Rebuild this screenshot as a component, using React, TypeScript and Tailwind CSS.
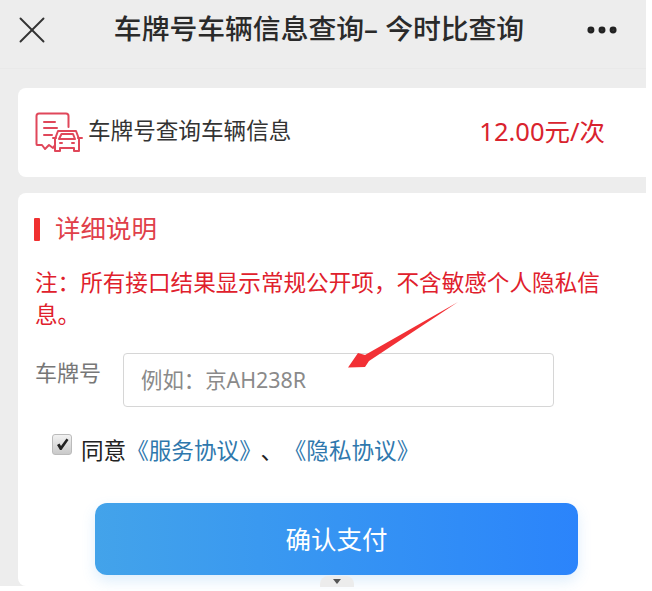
import { MoreHorizontal, X } from 'lucide-react'

const font = { fontFamily: '"Noto Sans", "Noto Sans CJK SC", sans-serif' }

function ReportCarIcon() {
  return (
    <svg width="48" height="42" viewBox="0 0 48 42" fill="none" stroke="#e0475a" strokeWidth="2" strokeLinecap="round" strokeLinejoin="round">
      <path d="M22 33 H20 L18 36 L14 33 L10 37 L7 33 L2 33 Q1.500 33 1.500 32 V4 Q1.500 1.500 4 1.500 H31 Q33.500 1.500 33.500 4 V15" />
      <path d="M9 10 H20 M9 16 H22 M9 23 H17" />
      <path d="M23 19 H41 L44 27 V39 H39 V36 H25 V39 H20 V27 Z" fill="white" />
      <path d="M26.500 22 H38 L40 27 H24 Z" />
      <path d="M18 26 H21 M43 26 H47 M25 31 H27 M37 31 H39" />
    </svg>
  )
}

function Arrow() {
  return (
    <svg className="absolute left-[340px] top-[295px]" width="125" height="80" viewBox="0 0 125 80">
      <path d="M118 7 L25 60 L18 58 L8 72.500 L25 72 L29 66 Z" fill="#f23035" />
    </svg>
  )
}

export default function App() {
  return (
    <div className="relative w-[652px] h-[591px] overflow-hidden bg-white text-[#222]" style={font}>
      <div className="w-[646px] h-[586px] bg-[#ededed]">
        <div className="h-[69px] flex items-center pl-[9px] pr-[25px] pb-[8px] border-b border-[#e9e9e9]">
          <X className="w-[46px] h-[46px] text-[#333]" strokeWidth={1} />
          <h1 className="flex-1 text-center text-[27.800px] leading-none font-medium text-[#2a2a2a] whitespace-nowrap -translate-y-[1px]">
            车牌号车辆信息查询– 今时比查询
          </h1>
          <MoreHorizontal className="w-[38px] h-[38px] text-[#222]" strokeWidth={2.4} />
        </div>

        <div className="ml-[18px] mt-[19px] h-[89px] bg-white rounded-l-lg flex items-center pl-[17px] pr-[41px]">
          <ReportCarIcon />
          <span className="ml-[5px] flex-1 text-[22.600px] leading-none text-[#333] -translate-y-[1px]">车牌号查询车辆信息</span>
          <span className="text-[25.500px] leading-none text-[#d9232e] -translate-y-[1px]">12.00元/次</span>
        </div>

        <div className="ml-[18px] mt-[16px] h-[393px] bg-white rounded-l-lg pl-[16px] pt-[24px]">
          <div className="flex items-center h-[24px]">
            <span className="w-[6px] h-[23px] bg-[#f03030] rounded-[1px]" />
            <span className="ml-[15px] text-[25.500px] leading-none text-[#e0404a]">详细说明</span>
          </div>
          <p className="mt-[26px] ml-[1px] w-[570px] text-[22.600px] leading-[32px] text-[#e0202c]">
            注：所有接口结果显示常规公开项，不含敏感个人隐私信息。
          </p>
          <div className="mt-[22px] flex items-start">
            <label className="ml-[1px] w-[88px] pt-[4px] text-[22px] leading-[30px] text-[#777]">车牌号</label>
            <div className="w-[431px] h-[54px] border border-[#d6d6d6] rounded-[4px] flex items-center pl-[17px] text-[21.400px] text-[#8a8a8a]">
              例如：京AH238R
            </div>
          </div>
          <div className="mt-[28px] ml-[18px] flex items-center h-[32px]">
            <span className="w-[20px] h-[21px] -translate-y-[7px] rounded-[3px] border border-[#bbb] bg-linear-to-b from-[#f2f2f2] to-[#c9c9c9] flex items-center justify-center">
              <svg width="15" height="15" viewBox="0 0 15 15">
                <path d="M2 8 L4.500 6.500 L6 9 L11.500 1.500 L13.500 3 L6.500 13 H5 Z" fill="#222" />
              </svg>
            </span>
            <span className="ml-[9px] text-[22.600px] leading-none whitespace-nowrap">
              同意<span className="text-[#2f78ad]">《服务协议》</span><span className="ml-[10px]">、</span><span className="ml-[12px] text-[#2f78ad]">《隐私协议》</span>
            </span>
          </div>
          <button className="mt-[36px] ml-[61px] w-[483px] h-[72px] rounded-[12px] bg-linear-to-r from-[#43a3ea] to-[#2b84fb] text-white text-[25.500px] shadow-[0_6px_14px_rgba(70,160,240,0.18)]">
            确认支付
          </button>
        </div>
      </div>
      <div className="absolute left-[320px] top-[576px] w-[34px] h-[11px] rounded-t-lg bg-[#ececec] flex items-center justify-center">
        <span className="w-0 h-0 border-x-[4px] border-x-transparent border-t-[5px] border-t-[#555]" />
      </div>
      <Arrow />
    </div>
  )
}
